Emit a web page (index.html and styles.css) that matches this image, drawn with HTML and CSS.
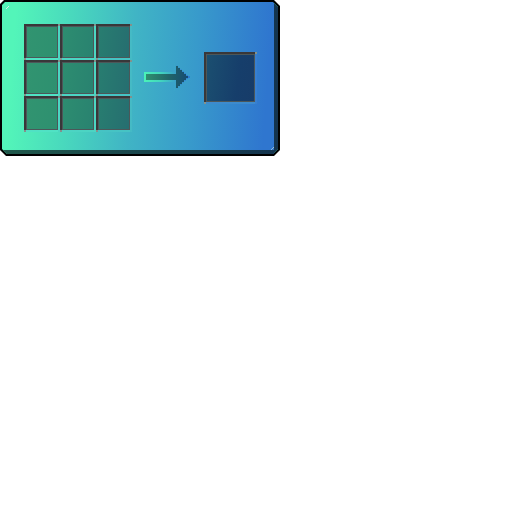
FILE: index.html
```html
<!DOCTYPE html>
<html lang="en">
<head>
<meta charset="utf-8">
<title>Crafting</title>
<link rel="stylesheet" href="styles.css">
</head>
<body>
<main class="frame">
  <div class="panel">
    <div class="grid">
      <div class="slot"></div><div class="slot"></div><div class="slot"></div>
      <div class="slot"></div><div class="slot"></div><div class="slot"></div>
      <div class="slot"></div><div class="slot"></div><div class="slot"></div>
    </div>
    <svg class="arrow" width="46" height="30" viewBox="0 0 46 30" shape-rendering="crispEdges" aria-hidden="true">
      <defs>
        <linearGradient id="edge"><stop offset="0" stop-color="#4af3b8"/><stop offset=".35" stop-color="#42d7bd"/><stop offset=".7" stop-color="#3a9fca"/><stop offset="1" stop-color="#3079d2"/></linearGradient>
        <linearGradient id="fill" gradientUnits="userSpaceOnUse" x1="2" y1="0" x2="44" y2="0"><stop offset="0" stop-color="#2f9070"/><stop offset=".55" stop-color="#216568"/><stop offset="1" stop-color="#164b72"/></linearGradient>
      </defs>
      <path fill="url(#edge)" d="M0 9H30V0H32V2H34V4H36V6H38V8H40V10H42V12H44V13H46V15H44V16H42V18H40V20H38V22H36V24H34V26H32V28H30V19H0Z"/>
      <path fill="url(#fill)" d="M2 11H32V3H34V5H36V7H38V9H40V11H42V13H44V15H42V17H40V19H38V21H36V23H34V25H32V17H2Z"/>
    </svg>
    <div class="slot result"></div>
  </div>
</main>
</body>
</html>
```
FILE: styles.css
```css
body {
  margin: 0;
  background: #fff;
}

.frame {
  width: fit-content;
  padding: 2px;
  background: #000;
  clip-path: polygon(4px 0, calc(100% - 6px) 0, 100% 6px, 100% calc(100% - 6px), calc(100% - 6px) 100%, 6px 100%, 0 calc(100% - 6px), 0 4px);
}

.panel {
  position: relative;
  display: flex;
  align-items: center;
  padding: 22px 17px 18px 22px;
  background: linear-gradient(94deg, #53f5b9 5%, #49d9bd 25%, #40b4c5 48%, #389acb 70%, #2f76cf 96%);
  border: 0 solid #14344f;
  border-width: 0 4px 4px 0;
  border-image: linear-gradient(90deg, #20594b, #14344f) 0 4 4 0;
  clip-path: polygon(3px 0, calc(100% - 5px) 0, 100% 5px, 100% calc(100% - 5px), calc(100% - 5px) 100%, 5px 100%, 0 calc(100% - 5px), 0 3px);
}

/* Bevel glints in the corners of the face */
.panel::before,
.panel::after {
  content: "";
  position: absolute;
  width: 3px;
  height: 3px;
  background: linear-gradient(135deg, transparent 35%, #d5eee8 35% 65%, transparent 65%);
}

.panel::before {
  top: 4px;
  left: 4px;
}

.panel::after {
  right: 0;
  bottom: 0;
  opacity: .6;
}

.grid {
  display: grid;
  grid-template-columns: repeat(3, 36px);
  grid-auto-rows: 36px;
}

.slot {
  --right: #4cd6c2;
  --bottom: #50e2c4;
  box-sizing: border-box;
  background:
    linear-gradient(#84918c, #84918c) 100% 0 / 2px 2px no-repeat,
    linear-gradient(#84918c, #84918c) 0 100% / 2px 2px no-repeat,
    linear-gradient(var(--right), var(--right)) 100% 0 / 2px 100% no-repeat,
    linear-gradient(var(--bottom), var(--bottom)) 0 100% / 100% 2px no-repeat,
    linear-gradient(#393739, #393739) 0 0 / 100% 2px no-repeat,
    linear-gradient(#393739, #393739) 0 0 / 2px 100% no-repeat;
  padding: 2px;
}

/* Highlights follow the panel's colour across the columns */
.slot:nth-child(3n + 2) {
  --bottom: #4cd4c3;
}

.slot:nth-child(3n) {
  --right: #45bac5;
  --bottom: #46c3c4;
}

.slot::before {
  content: "";
  display: block;
  box-sizing: border-box;
  height: 100%;
  border: 1px solid #4c5759;
  background: linear-gradient(98deg, #319470, #2e9070);
}

.slot:nth-child(3n + 2)::before {
  background: linear-gradient(98deg, #2d8d70, #298270);
}

.slot:nth-child(3n)::before {
  background: linear-gradient(98deg, #287d70, #266e70);
}

.arrow {
  margin: 0 14px 0 12px;
}

.slot.result {
  --right: #387fd0;
  --bottom: #3d8bce;
  width: 53px;
  height: 52px;
}

.slot.result::before {
  background: linear-gradient(98deg, #1b4f70, #163e6b 65%, #173c69);
}
```
